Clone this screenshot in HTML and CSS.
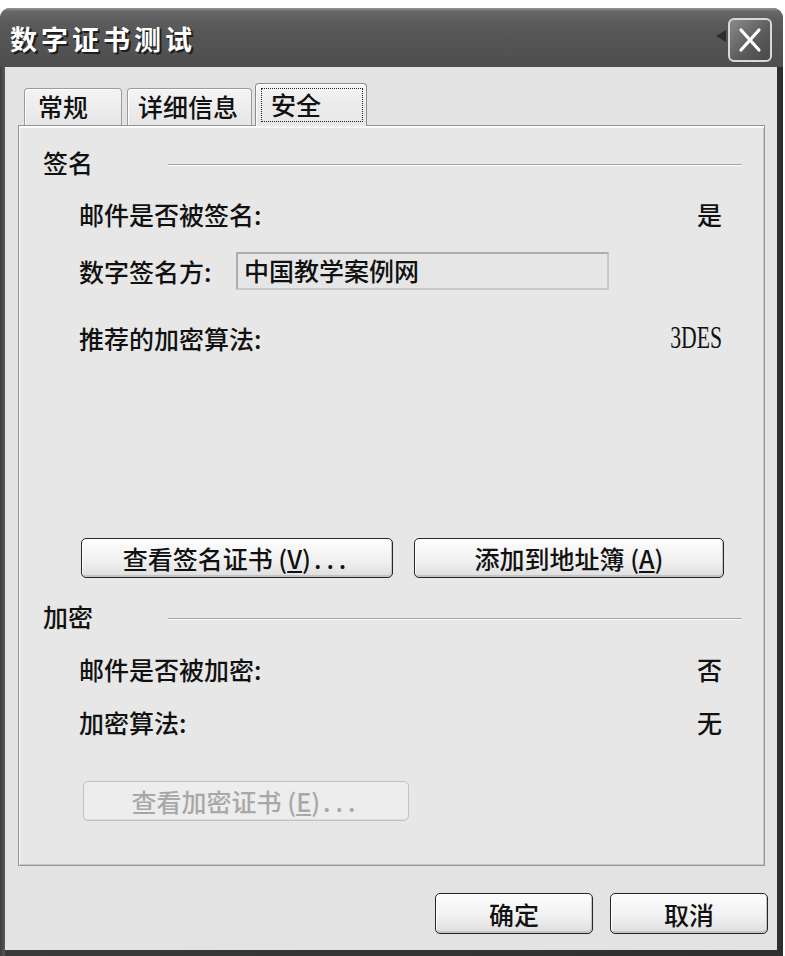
FILE: index.html
```html
<!DOCTYPE html>
<html lang="zh-CN">
<head>
<meta charset="utf-8">
<title>数字证书测试</title>
<link rel="stylesheet" href="styles.css">
</head>
<body>
<div class="window">
  <div class="titlebar">
    <span class="title">数字证书测试</span>
    <span class="grip"></span>
    <span class="close">
      <svg width="44" height="44" viewBox="0 0 44 44">
        <path d="M13 12 L31 32 M31 12 L13 32" stroke="#ffffff" stroke-width="3.2" stroke-linecap="round" fill="none"/>
      </svg>
    </span>
  </div>
  <div class="frame">
    <div class="body">
      <div class="tabs">
        <div class="tab tab-general">常规</div>
        <div class="tab tab-details">详细信息</div>
        <div class="tab tab-security active"><span class="focus">安全</span></div>
      </div>
      <div class="panel">
        <div class="group-head"><span class="group-label">签名</span><span class="rule"></span></div>
        <div class="row row-signed"><span>邮件是否被签名:</span><span class="val">是</span></div>
        <div class="row row-signer"><span class="lbl">数字签名方:</span><span class="field">中国教学案例网</span></div>
        <div class="row row-algo"><span>推荐的加密算法:</span><span class="val mono">3DES</span></div>
        <div class="btnrow">
          <button class="btn btn-view">查看签名证书 (<u>V</u>)<span class="dots">...</span></button>
          <button class="btn btn-add">添加到地址簿 (<u>A</u>)</button>
        </div>
        <div class="group-head group-enc"><span class="group-label">加密</span><span class="rule"></span></div>
        <div class="row row-enc"><span>邮件是否被加密:</span><span class="val">否</span></div>
        <div class="row row-encalgo"><span>加密算法:</span><span class="val">无</span></div>
        <button class="btn btn-disabled" disabled>查看加密证书 (<u>E</u>)<span class="dots">...</span></button>
      </div>
      <div class="footer">
        <button class="btn btn-ok">确定</button>
        <button class="btn btn-cancel">取消</button>
      </div>
    </div>
  </div>
</div>
</body>
</html>
```

FILE: styles.css
```css
* { box-sizing: border-box; }

html, body {
  margin: 0;
  padding: 0;
  background: #ffffff;
}

body {
  font-family: "Noto Sans CJK SC", "Noto Sans", sans-serif;
  font-weight: 500;
  color: #111111;
  width: 785px;
  height: 956px;
  overflow: hidden;
}

.window {
  margin-top: 8px;
  width: 783px;
  height: 948px;
  border-radius: 10px 10px 0 0;
  overflow: hidden;
  display: flex;
  flex-direction: column;
  background: #3e3e3e;
}

.titlebar {
  height: 59px;
  flex: none;
  display: flex;
  align-items: flex-start;
  background: linear-gradient(#9a9a9a 0, #6a6a6a 3px, #5c5c5c 12px, #565656 45%, #4e4e4e 100%);
  padding-left: 10px;
}

.title {
  flex: 1;
  padding-top: 13px;
  font-size: 27px;
  line-height: 36px;
  font-weight: 700;
  letter-spacing: 4px;
  color: #ffffff;
  text-shadow: 2px 2px 0 #1e1e1e, 1px 1px 1px #1e1e1e;
}

.grip {
  margin-top: 22px;
  margin-right: 2px;
  width: 0;
  height: 0;
  border-top: 6px solid transparent;
  border-bottom: 6px solid transparent;
  border-right: 10px solid #2e2e2e;
}

.close {
  margin-top: 10px;
  margin-right: 11px;
  width: 44px;
  height: 44px;
  border: 2px solid #d8d8d8;
  border-radius: 6px;
  background: linear-gradient(135deg, #8a8a8a, #5a5a5a 60%, #4a4a4a);
  display: flex;
  align-items: center;
  justify-content: center;
}

.close svg { display: block; margin: -2px; }

.frame {
  flex: 1;
  display: flex;
  padding: 0 6px 6px 5px;
  background: linear-gradient(90deg, #3c3c3c, #5a5a5a 5px, #3a3a3a 5px, #2e2e2e);
}

.body {
  flex: 1;
  background: #e3e3e3;
  display: flex;
  flex-direction: column;
}

.tabs {
  margin-top: 16px;
  margin-left: 19px;
  height: 42px;
  display: flex;
  align-items: flex-end;
  font-size: 25px;
}

.tab {
  height: 37px;
  line-height: 35px;
  border: 1px solid #9c9c9c;
  border-bottom: none;
  border-radius: 4px 4px 0 0;
  background: linear-gradient(#f4f4f4, #e6e6e6);
  box-shadow: inset 1px 1px 0 #ffffff;
}

.tab-general { width: 98px; padding-left: 13px; margin-right: 5px; }
.tab-details { width: 125px; padding-left: 10px; margin-right: 3px; }

.tab.active {
  position: relative;
  z-index: 1;
  width: 112px;
  height: 43px;
  margin-bottom: -1px;
  padding: 4px 0 0 5px;
  background: linear-gradient(#f6f6f6, #ececec 40%, #e7e7e7);
  border-color: #8c8c8c;
}

.focus {
  display: block;
  width: 102px;
  height: 34px;
  line-height: 31px;
  border: 1px dotted #222;
  padding-left: 9px;
}

.panel {
  margin-left: 13px;
  width: 747px;
  height: 741px;
  border: 1px solid #969696;
  background: #e7e7e7;
  box-shadow: inset 0 2px 0 #fbfbfb, inset 1px 0 0 #f4f4f4, inset -1px -1px 0 #c6c6c6;
  padding: 18px 22px 0 24px;
  display: flex;
  flex-direction: column;
  font-size: 25px;
}

.group-head {
  height: 36px;
  line-height: 36px;
  display: flex;
  align-items: center;
}

.group-label { width: 125px; flex: none; }

.rule {
  flex: 1;
  height: 2px;
  border-top: 1px solid #a4a4a4;
  border-bottom: 1px solid #fcfcfc;
  margin-top: 6px;
}

.row {
  height: 36px;
  line-height: 36px;
  margin-left: 36px;
  margin-right: 20px;
  display: flex;
  justify-content: space-between;
  align-items: center;
}

.row-signed { margin-top: 16px; }
.row-signer { margin-top: 20px; height: 38px; justify-content: flex-start; }
.row-algo { margin-top: 30px; }
.group-enc { margin-top: 20px; }
.row-enc { margin-top: 17px; }
.row-encalgo { margin-top: 17px; }

.lbl { width: 157px; flex: none; }

.field {
  width: 373px;
  height: 38px;
  line-height: 33px;
  padding-left: 6px;
  border: 2px solid #adadad;
  border-right-color: #c9c9c9;
  border-bottom-color: #c9c9c9;
  background: #e6e6e6;
}

.mono {
  font-family: "Liberation Serif", "DejaVu Serif", serif;
  font-weight: 400;
  font-size: 31px;
  display: inline-block;
  transform: scaleX(0.7);
  transform-origin: right center;
}

.btn {
  font-family: "Noto Sans CJK SC", "Noto Sans", sans-serif;
  font-weight: 500;
  font-size: 25px;
  line-height: 36px;
  color: #111111;
  height: 40px;
  padding: 0;
  border: 1px solid #262626;
  border-radius: 5px;
  background: linear-gradient(#fdfdfd, #f1f1f1 55%, #dedede);
  box-shadow: inset -1px -2px 0 #c4c4c4, inset 1px 1px 0 #ffffff;
}

.btn u { text-underline-offset: 2px; }

.dots { letter-spacing: 5px; margin-left: 3px; }

.btnrow {
  margin-top: 182px;
  margin-left: 38px;
  display: flex;
  gap: 21px;
}

.btn-view { width: 312px; }
.btn-add { width: 310px; }

.btn-disabled {
  margin-top: 41px;
  margin-left: 40px;
  width: 326px;
  color: #a8a8a8;
  border-color: #c2c2c2;
  background: #ededed;
  box-shadow: inset 0 -1px 0 #dddddd;
}

.footer {
  margin-top: 27px;
  padding-right: 9px;
  display: flex;
  justify-content: flex-end;
  gap: 17px;
}

.btn-ok, .btn-cancel {
  width: 158px;
  height: 41px;
}
```
